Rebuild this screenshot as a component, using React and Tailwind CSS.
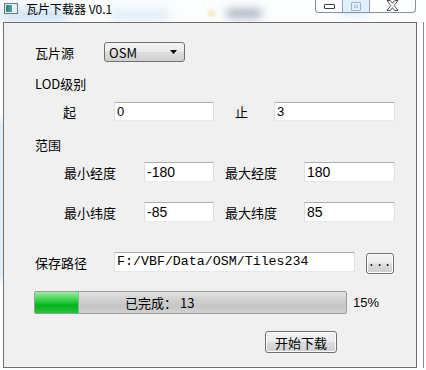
import React from 'react';

const cjk = "font-['Noto_Sans_CJK_SC','Noto_Sans',sans-serif]";
const sans = "font-['Liberation_Sans','Noto_Sans_CJK_SC',sans-serif]";
const mono = "font-['Liberation_Mono','Noto_Sans_CJK_SC',monospace]";

function TextBox({ value, w, font = sans, size = 'text-[13px]' }) {
    return (
        <div className={`${w} h-full flex items-center bg-white border border-t-[#abadb3] border-l-[#dbdfe6] border-r-[#dbdfe6] border-b-[#e3e9ef] pl-[2px] ${font} ${size} text-black leading-none`}>
            {value}
        </div>
    );
}

function Label({ text, w }) {
    return <div className={`${w} ${cjk} text-[13px] leading-none text-black`}>{text}</div>;
}

function WinButton({ children, className }) {
    return (
        <div className={`${className} flex items-center justify-center rounded-[3px] border border-[#707070] bg-[linear-gradient(#f2f2f2_0%,#ebebeb_48%,#dddddd_52%,#cfcfcf_100%)] shadow-[inset_0_0_0_1px_#fcfcfc]`}>
            {children}
        </div>
    );
}

export default function App() {
    return (
        <div className="w-[426px] h-[370px] bg-[#fbfdfe] relative overflow-hidden">
            {/* blurred glass behind the caption */}
            <div className="absolute left-[0px] top-[8px] w-[70px] h-[14px] rounded-full bg-[#b9d7ee] blur-[6px] opacity-70" />
            <div className="absolute left-[110px] top-[10px] w-[60px] h-[10px] rounded-full bg-[#cfe4f5] blur-[5px] opacity-70" />
            <div className="absolute left-[208px] top-[10px] w-[7px] h-[7px] rounded-full bg-[#f1dca0] blur-[2px] opacity-80" />
            <div className="absolute left-[226px] top-[9px] w-[36px] h-[9px] rounded-full bg-[#6f7f98] blur-[4px] opacity-60" />
            <div className="absolute left-[340px] top-[0px] w-[30px] h-[14px] rounded-full bg-[#bfe0fb] blur-[5px] opacity-80" />
            <div className="absolute left-[-4px] top-[120px] w-[8px] h-[160px] bg-[#c5dff2] blur-[3px] opacity-70" />

            <div className="relative flex flex-col">
                {/* caption */}
                <div className="h-[22px] flex items-start">
                    <div className="ml-[4px] mt-[3px] w-[14px] h-[11px] border border-[#6d7a84] bg-[linear-gradient(90deg,#2f7d5a_0%,#4aa3c6_60%,#e8eef2_61%)] shadow-[inset_0_0_0_1px_#e6edf1]" />
                    <div className={`ml-[8px] mt-[1px] ${cjk} text-[12px] leading-[16px] text-black`}>瓦片下载器 V0.1</div>
                    <div className="ml-auto mr-[10px] flex h-[13px] border border-t-0 border-[#8a8f96] rounded-b-[4px] overflow-hidden bg-white/60">
                        <div className="w-[27px] flex items-center justify-center border-r border-[#9aa0a7]">
                            <div className="w-[11px] h-[5px] border border-[#3c3c3c] rounded-[1px] bg-white" />
                        </div>
                        <div className="w-[27px] flex items-center justify-center border-r border-[#9aa0a7] bg-[#d9ecfb]/70">
                            <div className="w-[10px] h-[9px] border border-[#9fb3c4] rounded-[1px] flex items-center justify-center">
                                <div className="w-[4px] h-[3px] border border-[#b4c4d2]" />
                            </div>
                        </div>
                        <div className="w-[45px] flex items-start justify-center">
                            <svg width="13" height="11" viewBox="0 0 13 11">
                                <path d="M1 0.5 L4.3 0.5 L6.5 3.3 L8.7 0.5 L12 0.5 L8.2 5.5 L12 10.5 L8.7 10.5 L6.5 7.7 L4.3 10.5 L1 10.5 L4.8 5.5 Z" fill="#fff" stroke="#3a3a3a" strokeWidth="0.9" strokeLinejoin="round" />
                            </svg>
                        </div>
                    </div>
                </div>

                {/* client area */}
                <div className="flex">
                    <div className="ml-[3px] w-[414px] h-[346px] border border-[#6e6e6e] bg-[#f0f0f0] flex flex-col">
                        {/* 瓦片源 */}
                        <div className="mt-[19px] h-[20px] flex items-center pl-[31px]">
                            <Label text="瓦片源" w="w-[69px]" />
                            <div className="w-[81px] h-full rounded-[3px] border border-[#707070] bg-[linear-gradient(#f2f2f2_0%,#ebebeb_48%,#dddddd_52%,#cfcfcf_100%)] flex items-center px-[4px]">
                                <span className={`${cjk} text-[13px] leading-none`}>OSM</span>
                                <svg className="ml-auto mr-[3px]" width="7" height="4" viewBox="0 0 7 4"><path d="M0 0 H7 L3.5 4 Z" fill="#000" /></svg>
                            </div>
                        </div>

                        {/* LOD级别 */}
                        <div className="mt-[13px] h-[16px] flex items-center pl-[31px]">
                            <Label text="LOD级别" w="w-[80px]" />
                        </div>

                        <div className="mt-[11px] h-[19px] flex items-center pl-[59px]">
                            <Label text="起" w="w-[51px]" />
                            <TextBox value="0" w="w-[100px]" />
                            <div className="ml-[21px]"><Label text="止" w="w-[39px]" /></div>
                            <TextBox value="3" w="w-[121px]" />
                        </div>

                        {/* 范围 */}
                        <div className="mt-[15px] h-[16px] flex items-center pl-[31px]">
                            <Label text="范围" w="w-[60px]" />
                        </div>

                        <div className="mt-[10px] h-[20px] flex items-center pl-[60px]">
                            <Label text="最小经度" w="w-[80px]" />
                            <TextBox value="-180" w="w-[70px]" size="text-[14px]" />
                            <div className="ml-[11px]"><Label text="最大经度" w="w-[79px]" /></div>
                            <TextBox value="180" w="w-[91px]" size="text-[14px]" />
                        </div>

                        <div className="mt-[20px] h-[20px] flex items-center pl-[60px]">
                            <Label text="最小纬度" w="w-[80px]" />
                            <TextBox value="-85" w="w-[70px]" size="text-[14px]" />
                            <div className="ml-[11px]"><Label text="最大纬度" w="w-[79px]" /></div>
                            <TextBox value="85" w="w-[91px]" size="text-[14px]" />
                        </div>

                        {/* 保存路径 */}
                        <div className="mt-[30px] h-[21px] flex items-start pl-[31px]">
                            <div className="h-[20px] flex items-center"><Label text="保存路径" w="w-[79px]" /></div>
                            <div className="h-[20px] flex">
                                <TextBox value="F:/VBF/Data/OSM/Tiles234" w="w-[241px]" font={mono} size="text-[13.3px]" />
                            </div>
                            <WinButton className="ml-[11px] mt-[1px] w-[28px] h-[21px]">
                                <span className={`${mono} text-[12px] leading-none tracking-[1px] -mt-[2px]`}>...</span>
                            </WinButton>
                        </div>

                        {/* progress */}
                        <div className="mt-[18px] h-[23px] flex items-center pl-[30px]">
                            <div className="w-[313px] h-full rounded-[2px] border border-[#9c9c9c] bg-[linear-gradient(#e4e4e4_0%,#d0d0d0_35%,#c6c6c6_70%,#d2d2d2_100%)] flex items-center overflow-hidden">
                                <div className="w-[44px] h-full bg-[linear-gradient(#9fe8a6_0%,#3fd64f_35%,#06b01c_65%,#25c43a_100%)] shadow-[inset_-1px_0_0_#6ec87a]" />
                                <div className={`ml-[46px] ${cjk} text-[13px] leading-none text-black`}>已完成： 13</div>
                            </div>
                            <div className={`ml-[6px] ${sans} text-[13px] leading-none`}>15%</div>
                        </div>

                        {/* 开始下载 */}
                        <div className="mt-[17px] h-[22px] flex items-center pl-[261px]">
                            <WinButton className="w-[72px] h-full">
                                <span className={`${cjk} text-[13px] leading-none`}>开始下载</span>
                            </WinButton>
                        </div>
                    </div>
                    <div className="ml-[6px] w-[1px] h-[346px] bg-[#8a8a8a]" />
                </div>
            </div>
        </div>
    );
}
